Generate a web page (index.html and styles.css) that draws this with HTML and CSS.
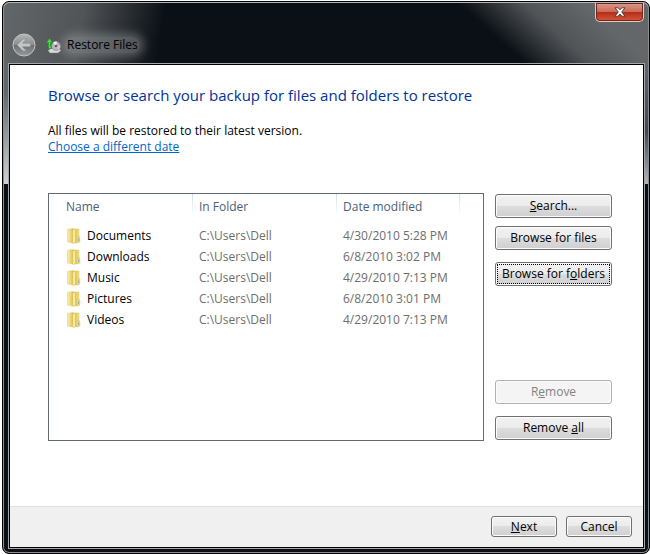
FILE: index.html
```html
<!DOCTYPE html>
<html lang="en">
<head>
    <meta charset="UTF-8">
    <meta name="viewport" content="width=device-width, initial-scale=1.0">
    <title>Restore Files</title>
    <link rel="stylesheet" href="styles.css">
</head>
<body>
    <!-- folder icon shared by all rows -->
    <svg class="defs" width="0" height="0" aria-hidden="true">
        <defs>
            <linearGradient id="folder-light" x1="0" x2="1">
                <stop offset="0" stop-color="#fbf3b4"/>
                <stop offset="1" stop-color="#dfc04e"/>
            </linearGradient>
            <linearGradient id="folder-dark" x1="0" x2="1">
                <stop offset="0" stop-color="#d6b848"/>
                <stop offset="1" stop-color="#f3e086"/>
            </linearGradient>
            <symbol id="folder" viewBox="0 0 16 16">
                <path d="M7 1h6v13l-6 1.500z" fill="url(#folder-dark)" stroke="#dcc467" stroke-width=".5"/>
                <path d="M1.500 1.500L7 .5v14.500l-5.500-1z" fill="url(#folder-light)" stroke="#dcc467" stroke-width=".5"/>
                <path d="M7 2.500l2-1v12.500l-2 1.800z" fill="#f7eaa0"/>
                <path d="M11 8l2.800 1v5l-3.300 1z" fill="#f1dc83" stroke="#d2b855" stroke-width=".5"/>
                <path d="M12.500 10.500v2.500" stroke="#86aebb"/>
            </symbol>
        </defs>
    </svg>

    <div class="window">
        <header class="titlebar">
            <button type="button" class="back" aria-label="Back">
                <svg width="24" height="24" viewBox="0 0 24 24">
                    <defs>
                        <linearGradient id="back-fill" x1="0" y1="0" x2="0" y2="1">
                            <stop offset="0" stop-color="#b4b6b7"/>
                            <stop offset=".48" stop-color="#8b8e90"/>
                            <stop offset=".52" stop-color="#6c7072"/>
                            <stop offset="1" stop-color="#989b9c"/>
                        </linearGradient>
                    </defs>
                    <circle cx="12" cy="12" r="11" fill="url(#back-fill)" stroke="#c0c2c3"/>
                    <path d="M5 12l6-6h3.500l-4 4.200h8v3.600h-8l4 4.200H11z" fill="#c3c5c6" stroke="#85898b" stroke-width=".6"/>
                </svg>
            </button>
            <svg class="app-icon" width="16" height="16" viewBox="0 0 16 16" aria-hidden="true">
                <path d="M2 12.500l3-2h8l2 2-3 2.500H4z" fill="#d9dcdd" stroke="#7b8184" stroke-width=".5"/>
                <circle cx="10" cy="8" r="4.500" fill="#b9b5c8" stroke="#77757f" stroke-width=".5"/>
                <path d="M10 8L7 4.700a4.500 4.500 0 0 1 4-1z" fill="#e9eef0"/>
                <path d="M10 8h4.500a4.500 4.500 0 0 1-2 3.800z" fill="#e5c9a0"/>
                <circle cx="10" cy="8" r="1.300" fill="#5c5964"/>
                <path d="M5.500 10.500H2.500V4.500H.5L3.500.5l3 4h-2v4h1z" fill="#3fe23c" stroke="#168f1b" stroke-width=".4"/>
            </svg>
            <span class="title">Restore Files</span>
            <button type="button" class="close" aria-label="Close">
                <svg width="12" height="10" viewBox="0 0 12 10">
                    <path d="M1 .8h3.200L6 2.900 7.800.8H11L7.700 4.900 11 9.200H7.800L6 7 4.200 9.200H1l3.300-4.300z" fill="#fff" stroke="#4a3338" stroke-width=".9"/>
                </svg>
            </button>
        </header>

        <main class="client">
            <div class="content">
                <h1>Browse or search your backup for files and folders to restore</h1>
                <p class="note">All files will be restored to their latest version.</p>
                <a class="date-link" href="#">Choose a different date</a>

                <div class="picker">
                    <div class="list">
                        <table>
                            <thead>
                                <tr>
                                    <th class="col-name">Name</th>
                                    <th class="col-folder">In Folder</th>
                                    <th>Date modified</th>
                                </tr>
                            </thead>
                            <tbody>
                                <tr>
                                    <td class="name"><svg class="folder"><use href="#folder"/></svg>Documents</td>
                                    <td>C:\Users\Dell</td>
                                    <td>4/30/2010 5:28 PM</td>
                                </tr>
                                <tr>
                                    <td class="name"><svg class="folder"><use href="#folder"/></svg>Downloads</td>
                                    <td>C:\Users\Dell</td>
                                    <td>6/8/2010 3:02 PM</td>
                                </tr>
                                <tr>
                                    <td class="name"><svg class="folder"><use href="#folder"/></svg>Music</td>
                                    <td>C:\Users\Dell</td>
                                    <td>4/29/2010 7:13 PM</td>
                                </tr>
                                <tr>
                                    <td class="name"><svg class="folder"><use href="#folder"/></svg>Pictures</td>
                                    <td>C:\Users\Dell</td>
                                    <td>6/8/2010 3:01 PM</td>
                                </tr>
                                <tr>
                                    <td class="name"><svg class="folder"><use href="#folder"/></svg>Videos</td>
                                    <td>C:\Users\Dell</td>
                                    <td>4/29/2010 7:13 PM</td>
                                </tr>
                            </tbody>
                        </table>
                    </div>
                    <div class="actions">
                        <div class="group">
                            <button type="button" class="btn"><u>S</u>earch...</button>
                            <button type="button" class="btn">Browse for f<u>i</u>les</button>
                        </div>
                        <button type="button" class="btn focused">Browse for f<u>o</u>lders</button>
                        <button type="button" class="btn remove" disabled>R<u>e</u>move</button>
                        <button type="button" class="btn">Remove <u>a</u>ll</button>
                    </div>
                </div>
            </div>

            <footer class="footer">
                <button type="button" class="btn"><u>N</u>ext</button>
                <button type="button" class="btn">Cancel</button>
            </footer>
        </main>
    </div>
</body>
</html>
```

FILE: styles.css
```css
* { box-sizing: border-box; }
body { margin: 0; padding: 1px 0 0 2px; height: 100vh; background: #fff; color: #000; font-family: "Open Sans", "Noto Sans", sans-serif; font-size: 12px; line-height: 16px; }
button { font: inherit; color: inherit; margin: 0; padding: 0; }
.defs { display: block; height: 0; }

/* glass frame */
.window {
    display: flex; flex-direction: column; height: 100%; padding: 0 5px 5px 6px;
    border: 1px solid #000; border-radius: 7px; box-shadow: inset 0 0 0 1px #8d9193;
    background:
        linear-gradient(#63676a 0, #63676a 60px, #44484b 130px, #b4b6b8 182px, #0b1016 182px) right / 50% 100% no-repeat,
        linear-gradient(#63676a 0, #63676a 90px, #d0d2d3 182px, #0b1016 182px);
}
.titlebar {
    display: flex; align-items: flex-end; height: 61px; margin: 1px -4px 0 -5px; padding: 0 4px 7px 8px; border-radius: 6px 6px 0 0;
    background:
        linear-gradient(42deg, transparent 42%, #505457 62%, #63676a 80%) right / 260px 100% no-repeat,
        linear-gradient(100deg, #63676a 0, #505457 80px, #0b1016 160px);
    box-shadow: 0 -1px #b4b8ba;
}
.back { display: flex; border: none; background: none; }
.app-icon { margin: 0 3px 3px 10px; }
.title { margin-bottom: 4px; padding: 0 2px; border-radius: 8px; background: rgba(160, 164, 167, .4); box-shadow: 0 0 8px 4px rgba(160, 164, 167, .4); }
.close {
    align-self: flex-start; display: flex; align-items: center; justify-content: center; width: 49px; height: 19px; margin-left: auto;
    border: 1px solid #f0c5b8; border-top: none; border-radius: 0 0 5px 5px;
    background: linear-gradient(#dc9a8c, #cb6a58 48%, #b52c17 50%, #d3583c);
    box-shadow: inset 0 0 0 1px #6b2a20;
}

.client { flex: 1; display: flex; flex-direction: column; background: #fff; border: 1px solid #000; outline: 1px solid #a4a8aa; }
.content { flex: 1; display: flex; flex-direction: column; padding: 20px 31px 65px 38px; }
h1 { margin: 0; color: #003399; font-size: 15px; font-weight: normal; line-height: 20px; }
.note { margin: 18px 0 0; }
.date-link { align-self: flex-start; color: #0066cc; }

.picker { flex: 1; display: flex; gap: 11px; margin-top: 38px; }
.list { flex: 1; border: 1px solid #646a72; }
/* leaves a blank strip right of the last column */
table { width: calc(100% - 23px); table-layout: fixed; border-collapse: collapse; }
th, td { padding: 0 0 0 6px; text-align: left; font-weight: normal; white-space: nowrap; }
th { height: 26px; color: #4c607a; background: linear-gradient(#d5dfe9, #fff) right top / 1px 22px no-repeat; }
th:first-child, td:first-child { padding-left: 17px; }
.col-name, .col-folder { width: 144px; }
td { height: 21px; color: #6d6d6d; }
tbody tr:first-child td { height: 26px; padding-top: 5px; }
td.name { color: #000; }
.folder { width: 16px; height: 16px; margin-right: 5px; vertical-align: top; }

.actions { display: flex; flex-direction: column; gap: 12px; width: 117px; padding: 1px 0; }
.group { display: flex; flex-direction: column; gap: 8px; }
.btn {
    height: 24px; border: 1px solid #707070; border-radius: 3px; box-shadow: inset 0 0 0 1px #fcfcfc;
    background: linear-gradient(#f2f2f2, #ebebeb 50%, #dddddd 50%, #cfcfcf);
}
.btn.focused { outline: 1px dotted #000; outline-offset: -3px; }
.btn:disabled { color: #838383; border-color: #adb2b5; background: #f4f4f4; }
.remove { margin-top: auto; }

.footer { display: flex; justify-content: flex-end; gap: 9px; padding: 9px 11px 10px; background: #f0f0f0; border-top: 1px solid #dfdfdf; }
.footer .btn { width: 66px; height: 21px; }
```
